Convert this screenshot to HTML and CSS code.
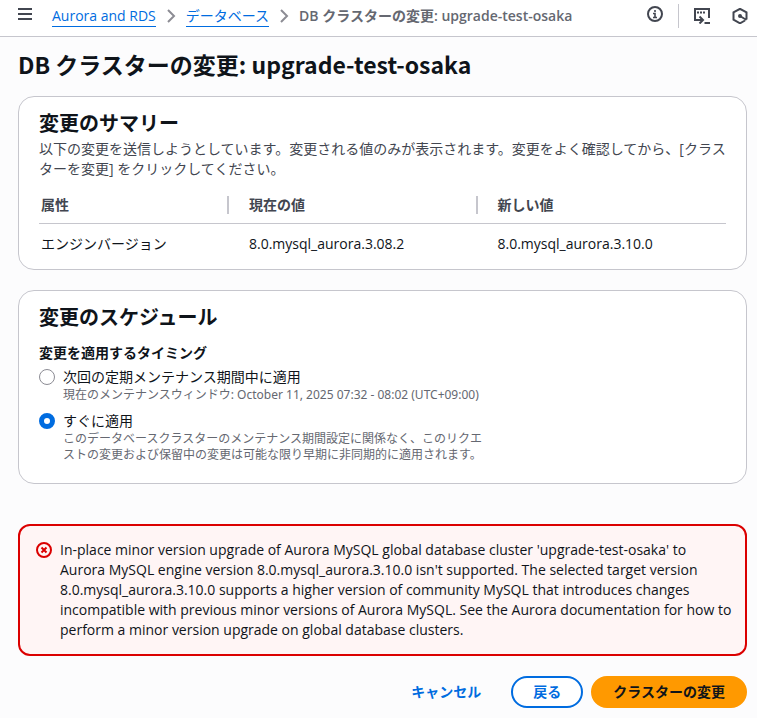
FILE: index.html
```html
<!DOCTYPE html>
<html lang="ja">
<head>
    <meta charset="UTF-8">
    <meta name="viewport" content="width=device-width, initial-scale=1.0">
    <title>DB クラスターの変更: upgrade-test-osaka</title>
    <link rel="stylesheet" href="styles.css">
</head>
<body>
    <header class="topbar">
        <button type="button" class="icon-button panel-toggle" aria-label="メニュー">
            <svg width="16" height="16" viewBox="0 0 16 16"><path d="M1 3h14M1 8h14M1 13h14"/></svg>
        </button>
        <nav class="breadcrumbs">
            <a href="#">Aurora and RDS</a>
            <svg class="chevron" width="16" height="16" viewBox="0 0 16 16"><path d="M5 2l6 6-6 6"/></svg>
            <a href="#">データベース</a>
            <svg class="chevron" width="16" height="16" viewBox="0 0 16 16"><path d="M5 2l6 6-6 6"/></svg>
            <span class="current">DB クラスターの変更: upgrade-test-osaka</span>
        </nav>
        <div class="tools">
            <button type="button" class="icon-button panel-toggle" aria-label="情報">
                <svg width="16" height="16" viewBox="0 0 16 16"><circle cx="8" cy="8" r="7"/><path d="M8 4v2M6 7.500h2V12M6 11.500h4" stroke-width="1.600"/></svg>
            </button>
            <div class="divider"></div>
            <button type="button" class="icon-button" aria-label="CloudShell">
                <svg width="16" height="16" viewBox="0 0 16 16"><path d="M3 12H1V1h14v9M3 4.500h2M6 4.500h2M9 4.500h2M3 12h6M5.500 8.500L9 12l-3.500 3.500M10.500 15H16"/></svg>
            </button>
            <button type="button" class="icon-button" aria-label="Amazon Q">
                <svg width="16" height="16" viewBox="0 0 16 16"><path d="M13 12.500L8 15.300 1.500 11.700V4.300L8 .8l6.500 3.500v7.200M8 8l6.500 4"/><circle cx="8" cy="8" r="1"/></svg>
            </button>
        </div>
    </header>

    <main>
        <h1>DB クラスターの変更: upgrade-test-osaka</h1>

        <section class="card summary">
            <h2>変更のサマリー</h2>
            <p class="description">以下の変更を送信しようとしています。変更される値のみが表示されます。変更をよく確認してから、[クラスターを変更] をクリックしてください。</p>
            <table>
                <thead>
                    <tr>
                        <th><div>属性</div></th>
                        <th><div>現在の値</div></th>
                        <th><div>新しい値</div></th>
                    </tr>
                </thead>
                <tbody>
                    <tr>
                        <td>エンジンバージョン</td>
                        <td>8.0.mysql_aurora.3.08.2</td>
                        <td>8.0.mysql_aurora.3.10.0</td>
                    </tr>
                </tbody>
            </table>
        </section>

        <section class="card schedule">
            <h2>変更のスケジュール</h2>
            <fieldset>
                <legend>変更を適用するタイミング</legend>
                <div class="option">
                    <input type="radio" name="timing" id="maintenance">
                    <label for="maintenance">次回の定期メンテナンス期間中に適用
                        <small>現在のメンテナンスウィンドウ: October 11, 2025 07:32 - 08:02 (UTC+09:00)</small>
                    </label>
                </div>
                <div class="option">
                    <input type="radio" name="timing" id="immediate" checked>
                    <label for="immediate">すぐに適用
                        <small>このデータベースクラスターのメンテナンス期間設定に関係なく、このリクエストの変更および保留中の変更は可能な限り早期に非同期的に適用されます。</small>
                    </label>
                </div>
            </fieldset>
        </section>

        <div class="alert" role="alert">
            <svg width="16" height="16" viewBox="0 0 16 16"><circle cx="8" cy="8" r="7"/><path d="M5.500 5.500l5 5M10.500 5.500l-5 5"/></svg>
            <p>In-place minor version upgrade of Aurora MySQL global database cluster 'upgrade-test-osaka' to Aurora MySQL engine version 8.0.mysql_aurora.3.10.0 isn't supported. The selected target version 8.0.mysql_aurora.3.10.0 supports a higher version of community MySQL that introduces changes incompatible with previous minor versions of Aurora MySQL. See the Aurora documentation for how to perform a minor version upgrade on global database clusters.</p>
        </div>

        <div class="actions">
            <button type="button" class="btn">キャンセル</button>
            <button type="button" class="btn btn-normal">戻る</button>
            <button type="submit" class="btn btn-primary">クラスターの変更</button>
        </div>
    </main>
</body>
</html>
```
FILE: styles.css
```css
* {
    box-sizing: border-box;
}
body {
    margin: 0;
    font-family: "Open Sans", "Noto Sans CJK JP", sans-serif;
    font-size: 14px;
    line-height: 20px;
    color: #0f141a;
    background-color: #fcfcfd;
}
svg {
    display: block;
    flex: none;
    fill: none;
    stroke: currentColor;
    stroke-width: 2;
}
h1, h2, p {
    margin: 0;
}
button {
    font: inherit;
    cursor: pointer;
}

/* topbar */
.topbar {
    display: flex;
    align-items: center;
    height: 37px;
    padding: 0 9px 4px 17px;
    background-color: #fff;
    border-bottom: 1px solid #c6c6cd;
}
.icon-button {
    padding: 0;
    border: none;
    background: none;
    color: #424650;
}
.panel-toggle {
    padding-bottom: 4px;
}
.breadcrumbs {
    display: flex;
    align-items: center;
    gap: 7px;
    margin-left: 19px;
    white-space: nowrap;
}
.breadcrumbs a {
    color: #006ce0;
    text-decoration: none;
    border-bottom: 1px solid #006ce0;
}
.chevron {
    color: #8c8c94;
}
.current {
    color: #656871;
    font-weight: 600;
}
.tools {
    display: flex;
    align-items: center;
    gap: 15px;
    margin-left: auto;
}
.tools .icon-button:last-child {
    margin-left: 7px;
}
.divider {
    width: 1px;
    height: 24px;
    background-color: #c6c6cd;
}

main {
    padding: 11px 10px 10px 18px;
}
h1 {
    margin-bottom: 16px;
    font-family: "Noto Sans CJK JP", sans-serif;
    font-size: 23px;
    line-height: 32px;
}
h2 {
    font-size: 20px;
    line-height: 24px;
}

/* cards */
.card {
    margin-bottom: 20px;
    padding: 15px 20px 20px;
    background-color: #fff;
    border: 1px solid #c6c6cd;
    border-radius: 16px;
}
.summary {
    padding-bottom: 5px;
}
.description {
    margin: 3px 0 8px;
    color: #424650;
}
table {
    width: 100%;
    border-collapse: collapse;
    table-layout: fixed;
}
th, td {
    padding: 10px 0 10px 20px;
    text-align: left;
}
th {
    padding: 9px 0;
    color: #424650;
    border-bottom: 1px solid #c6c6cd;
}
th div {
    padding-left: 20px;
    line-height: 18px;
    border-right: 2px solid #c6c6cd;
}
th:first-child {
    width: 190px;
}
th:last-child div {
    border-right: none;
}
th:first-child div, td:first-child {
    padding-left: 2px;
}

fieldset {
    max-width: 448px;
    margin: 13px 0 0;
    padding: 0;
    border: none;
}
legend {
    padding: 0;
    margin-bottom: 4px;
    font-weight: 700;
}
.option {
    display: flex;
    gap: 8px;
}
.option + .option {
    margin-top: 8px;
}
.option input {
    appearance: none;
    flex: none;
    width: 16px;
    height: 16px;
    margin: 2px 0;
    border: 1px solid #8c8c94;
    border-radius: 50%;
    background-color: #fff;
}
.option input:checked {
    border: 5px solid #006ce0;
}
.option small {
    display: block;
    font-family: "Noto Sans", "Noto Sans CJK JP", sans-serif;
    font-size: 12px;
    line-height: 16px;
    color: #656871;
}

.alert {
    display: flex;
    gap: 8px;
    margin-top: 40px;
    padding: 14px 12px 14px 16px;
    background-color: #fff5f5;
    border: 2px solid #db0000;
    border-radius: 12px;
}
.alert svg {
    margin-top: 2px;
    color: #db0000;
}

.actions {
    display: flex;
    justify-content: flex-end;
    gap: 8px;
    margin-top: 20px;
}
.btn {
    padding: 4px 20px;
    font-weight: 700;
    line-height: 20px;
    color: #006ce0;
    background: none;
    border: 2px solid transparent;
    border-radius: 20px;
}
.btn-normal {
    background-color: #fff;
    border-color: #006ce0;
}
.btn-primary {
    color: #0f141a;
    background-color: #ff9900;
    border-color: #ff9900;
}
```
